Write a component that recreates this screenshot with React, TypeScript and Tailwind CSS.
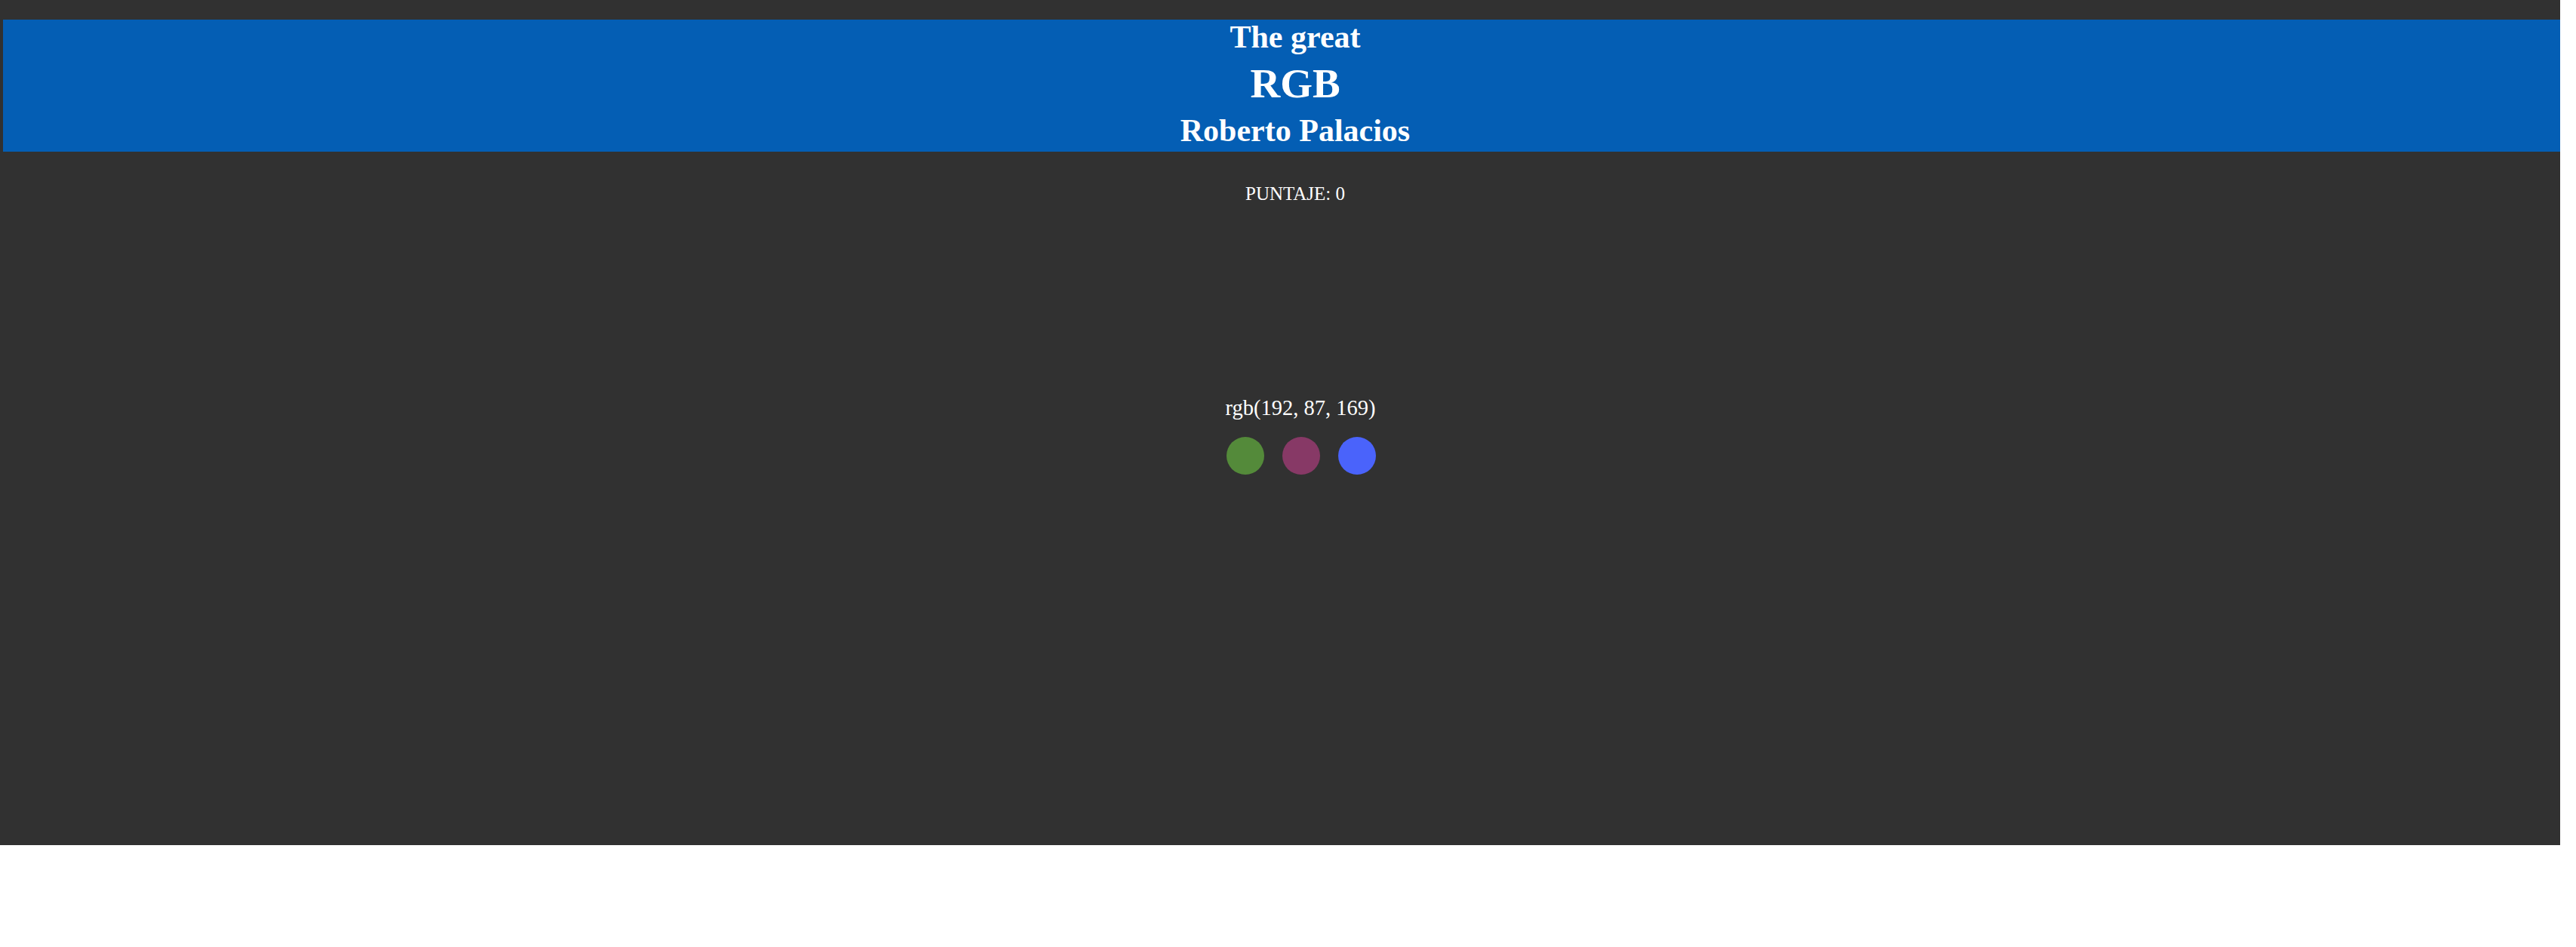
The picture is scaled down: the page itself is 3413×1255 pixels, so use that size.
import React from "react";

const colores = ["bg-[#548a3a]", "bg-[#873966]", "bg-[#4a63fb]"];

const App = () => {
  return (
    <div className="w-[3392px] h-[1120px] bg-[#313131] pt-[26px] font-['Liberation_Serif',serif] text-white">
      <header className="ml-1 pl-[36px] bg-[#045eb4] pb-[5px] flex flex-col items-center font-bold">
        <h2 className="text-[42px] leading-[46px]">The great</h2>
        <h1 className="text-[55px] leading-[78px]">RGB</h1>
        <h2 className="text-[42px] leading-[46px]">Roberto Palacios</h2>
      </header>
      <div className="pl-[40px] flex flex-col items-center">
        <p className="mt-[42px] text-[25px] leading-[28px]">PUNTAJE: 0</p>
        <p className="mt-[254px] pl-[14px] text-[28.5px] leading-[31px]">rgb(192, 87, 169)</p>
        <div className="mt-[23px] pl-[16px] flex gap-6">
          {colores.map((c) => (
            <div key={c} className={"w-[50px] h-[50px] rounded-full " + c}></div>
          ))}
        </div>
      </div>
    </div>
  );
};

export default App;
